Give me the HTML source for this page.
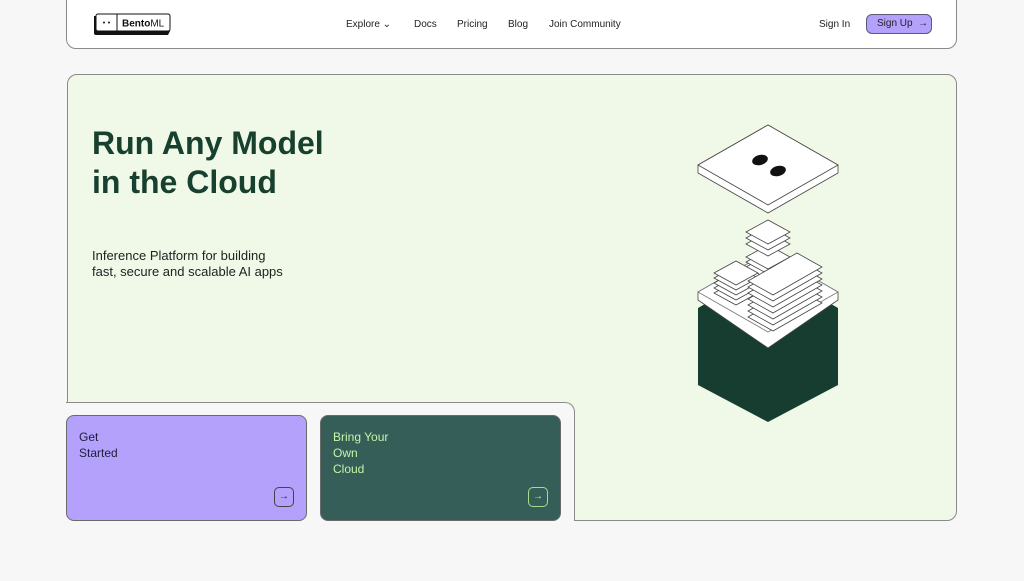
<!DOCTYPE html>
<html><head><style>
*{margin:0;padding:0;box-sizing:border-box}
body{width:1024px;height:568px;background:#f7f7f7;font-family:"Liberation Sans",sans-serif;position:relative;overflow:hidden;color:#1f1f1f}
.nav{position:absolute;left:66px;top:-10px;width:891px;height:59px;background:#fff;border:1px solid #8a8a8a;border-radius:10px}
.nav a{position:absolute;top:28px;font-size:10px;color:#222}
.logo{position:absolute;left:26px;top:22px;width:78px;height:24px}
.green{position:absolute;background:#f0f9e8;border:1px solid #8a8a8a}
.card{position:absolute;top:415px;width:241px;height:106px;border-radius:8px;border:1px solid #6a6a6a;padding:13px 12px;font-size:12px;line-height:16px}
.arr{position:absolute;right:12px;bottom:13px;width:20px;height:20px;border-radius:5px;font-size:10px;text-align:center;line-height:18px}
</style></head><body>
<div class="nav">
 <svg class="logo" viewBox="0 0 78 24">
  <path d="M1 3 L1 20 Q1 22 3 22 L75 22 L77 18 L77 3 Z" fill="#111"/>
  <rect x="3" y="1" width="74" height="17" rx="2" fill="#fff" stroke="#111" stroke-width="1"/>
  <line x1="24" y1="1" x2="24" y2="18" stroke="#111"/>
  <circle cx="11" cy="9.5" r="1" fill="#111"/><circle cx="16" cy="9.5" r="1" fill="#111"/>
  <text x="29" y="13.5" font-size="10" font-family="Liberation Sans" fill="#111"><tspan font-weight="bold">Bento</tspan>ML</text>
 </svg>
 <a style="left:279px">Explore ⌄</a>
 <a style="left:347px">Docs</a>
 <a style="left:390px">Pricing</a>
 <a style="left:441px">Blog</a>
 <a style="left:482px">Join Community</a>
 <a style="left:752px">Sign In</a>
 <div style="position:absolute;left:799px;top:23px;width:66px;height:20px;background:#b3a1fb;border:1px solid #5a5a7a;border-radius:6px;font-size:10px;line-height:18px;padding-left:10px;color:#222">Sign Up &nbsp;→</div>
</div>
<div class="green" style="left:67px;top:74px;width:890px;height:447px;border-radius:10px"></div>
<div style="position:absolute;left:66px;top:402px;width:509px;height:119px;background:#f7f7f7;border-top:1px solid #8a8a8a;border-right:1px solid #8a8a8a;border-top-right-radius:10px"></div>
<div style="position:absolute;left:66px;top:521px;width:509px;height:60px;background:#f7f7f7"></div>
<div style="position:absolute;left:92px;top:124px;font-size:32px;font-weight:bold;line-height:39px;color:#17402f">Run Any Model<br>in the Cloud</div>
<div style="position:absolute;left:92px;top:248px;font-size:13px;line-height:16px;color:#222">Inference Platform for building<br>fast, secure and scalable AI apps</div>
<div class="card" style="left:66px;background:#b3a1fb;color:#1f1f3a">Get<br>Started<div class="arr" style="border:1px solid #444">→</div></div>
<div class="card" style="left:320px;background:#355e58;color:#c8f3a8">Bring Your<br>Own<br>Cloud<div class="arr" style="border:1px solid #a8dc8e;color:#c8f3a8">→</div></div>
<svg style="position:absolute;left:0;top:0" width="1024" height="568" viewBox="0 0 1024 568" fill="#fff" stroke="#444" stroke-width="0.8">
 <path d="M698 165 L768 125 L838 165 L838 173 L768 213 L698 173 Z"/>
 <path d="M698 165 L768 125 L838 165 L768 205 Z"/>
 <ellipse cx="760" cy="160" rx="8" ry="5" fill="#111" stroke="none" transform="rotate(-15 760 160)"/>
 <ellipse cx="778" cy="171" rx="8" ry="5" fill="#111" stroke="none" transform="rotate(-15 778 171)"/>
 <path d="M698 308 L768 268 L838 308 L838 385 L768 422 L698 385 Z" fill="#173d30" stroke="none"/>
 <path d="M698 292 L768 252 L838 292 L838 300 L768 348 L698 300 Z"/>
 <path d="M698 292 L768 252 L838 292 L768 332 Z" stroke="#777"/>
 <g>
  <path d="M746 262 L768 250 L790 262 L768 274 Z" transform="translate(0,15)"/>
  <path d="M746 262 L768 250 L790 262 L768 274 Z" transform="translate(0,10)"/>
  <path d="M746 262 L768 250 L790 262 L768 274 Z" transform="translate(0,5)"/>
  <path d="M746 262 L768 250 L790 262 L768 274 Z"/>
  <path d="M746 250 L768 238 L790 250 L768 262 Z" transform="translate(0,7)"/>
  <path d="M746 244 L768 232 L790 244 L768 256 Z"/>
  <path d="M746 238 L768 226 L790 238 L768 250 Z"/>
  <path d="M746 232 L768 220 L790 232 L768 244 Z"/>
 </g>
 <g>
  <path d="M714 293 L736 281 L758 293 L736 305 Z"/>
  <path d="M714 288 L736 276 L758 288 L736 300 Z"/>
  <path d="M714 283 L736 271 L758 283 L736 295 Z"/>
  <path d="M714 278 L736 266 L758 278 L736 290 Z"/>
  <path d="M714 273 L736 261 L758 273 L736 285 Z"/>
 </g>
 <g>
  <path d="M748 317 L797 289 L822 303 L773 331 Z"/>
  <path d="M748 311 L797 283 L822 297 L773 325 Z"/>
  <path d="M748 305 L797 277 L822 291 L773 319 Z"/>
  <path d="M748 299 L797 271 L822 285 L773 313 Z"/>
  <path d="M748 293 L797 265 L822 279 L773 307 Z"/>
  <path d="M748 287 L797 259 L822 273 L773 301 Z"/>
  <path d="M748 281 L797 253 L822 267 L773 295 Z"/>
 </g>
</svg>
</body></html>
